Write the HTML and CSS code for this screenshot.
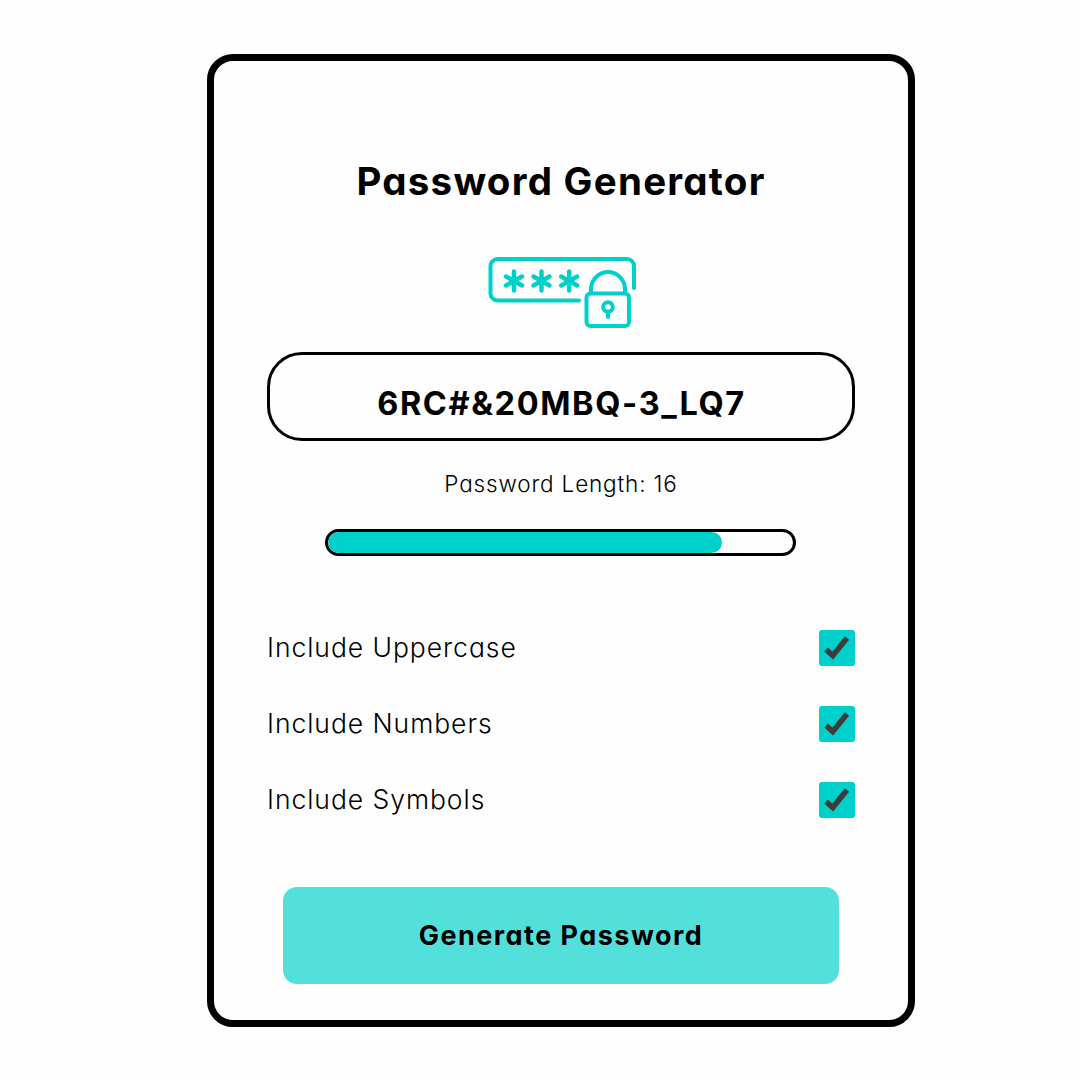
FILE: index.html
```html
<!DOCTYPE html>
<html lang="en">
<head>
<meta charset="utf-8">
<title>Password Generator</title>
<link rel="stylesheet" href="styles.css">
</head>
<body>
<main class="card">
  <h1 class="title">Password Generator</h1>
  <svg class="logo" viewBox="0 0 148 73" fill="none" stroke="#00d0cb" stroke-width="4" stroke-linecap="round" stroke-linejoin="round" aria-hidden="true">
    <path d="M91 44.500H9.500a7 7 0 0 1-7-7V10a7 7 0 0 1 7-7H139a7 7 0 0 1 7 7V32"/>
    <g stroke-width="4.500">
      <path d="M26 15.500V34.500M18 20.500L34 29.500M34 20.500L18 29.500"/>
      <path d="M53.500 15.500V34.500M45.500 20.500L61.500 29.500M61.500 20.500L45.500 29.500"/>
      <path d="M81.200 15.500V34.500M73.200 20.500L89.200 29.500M89.200 20.500L73.200 29.500"/>
    </g>
    <path d="M103 37V33.500a17 17.500 0 0 1 34 0V37"/>
    <rect x="98.500" y="37.500" width="42.500" height="32.500" rx="4"/>
    <circle cx="120" cy="51" r="4.800"/>
    <path d="M120 57V61"/>
  </svg>
  <div class="password">6RC#&amp;20MBQ-3_LQ7</div>
  <p class="length">Password Length: 16</p>
  <div class="slider"><div class="fill"></div></div>
  <div class="options">
    <div class="option"><span>Include Uppercase</span><span class="check"><svg viewBox="0 0 36 36"><path d="M7 19.500L13.800 25.500L28 8" fill="none" stroke="#3c3c3c" stroke-width="5.500"/></svg></span></div>
    <div class="option"><span>Include Numbers</span><span class="check"><svg viewBox="0 0 36 36"><path d="M7 19.500L13.800 25.500L28 8" fill="none" stroke="#3c3c3c" stroke-width="5.500"/></svg></span></div>
    <div class="option"><span>Include Symbols</span><span class="check"><svg viewBox="0 0 36 36"><path d="M7 19.500L13.800 25.500L28 8" fill="none" stroke="#3c3c3c" stroke-width="5.500"/></svg></span></div>
  </div>
  <button class="generate" type="button">Generate Password</button>
</main>
</body>
</html>
```
FILE: styles.css
```css
* { box-sizing: border-box; }
body {
  margin: 0;
  height: 1080px;
  overflow: hidden;
  padding: 53.5px 0 0 207px;
  background: #fefefe;
  color: #000;
  font-family: Inter, "Open Sans", sans-serif;
  font-feature-settings: "cv11" 1;
}
.card {
  width: 708px;
  height: 973.5px;
  border: 7px solid #000;
  border-radius: 26px;
  display: flex;
  flex-direction: column;
  align-items: center;
  padding-top: 95.5px;
  background: #fefefe;
}
.title {
  margin: 0;
  font-size: 38.5px;
  line-height: 50px;
  font-weight: 700;
  letter-spacing: 1.25px;
  white-space: nowrap;
}
.logo {
  width: 148px;
  height: 73px;
  margin: 50px 0 0 1px;
}
.password {
  width: 588px;
  height: 89px;
  margin-top: 23px;
  border: 3px solid #000;
  border-radius: 35px;
  display: flex;
  align-items: center;
  justify-content: center;
  padding: 13px 0 0 1px;
  font-size: 32.5px;
  font-weight: 700;
  letter-spacing: 1.6px;
}
.length {
  margin: 27.5px 0 0;
  font-size: 22.5px;
  line-height: 30px;
  font-weight: 300;
  letter-spacing: 0.85px;
}
.slider {
  width: 471px;
  height: 27px;
  margin: 30.5px 0.5px 0 0;
  border: 3px solid #000;
  border-radius: 14px;
  overflow: hidden;
}
.fill {
  width: 394px;
  height: 100%;
  border-radius: 11px;
  background: #00d0cb;
}
.options {
  width: 588px;
  margin-top: 74px;
  display: flex;
  flex-direction: column;
  gap: 40px;
}
.option {
  height: 36px;
  display: flex;
  align-items: center;
  justify-content: space-between;
  font-size: 26.5px;
  font-weight: 300;
  letter-spacing: 0.95px;
}
.option > span:first-child { padding-bottom: 2px; }
.check {
  width: 36px;
  height: 36px;
  border-radius: 3px;
  background: #00d0cb;
}
.check svg { display: block; }
.generate {
  width: 556px;
  height: 97.5px;
  margin-top: 68.5px;
  padding: 0;
  border: 0;
  border-radius: 14px;
  background: #53e0da;
  color: #000;
  font: 700 27px Inter, "Open Sans", sans-serif;
  font-feature-settings: "cv11" 1;
  letter-spacing: 1.45px;
}
```
